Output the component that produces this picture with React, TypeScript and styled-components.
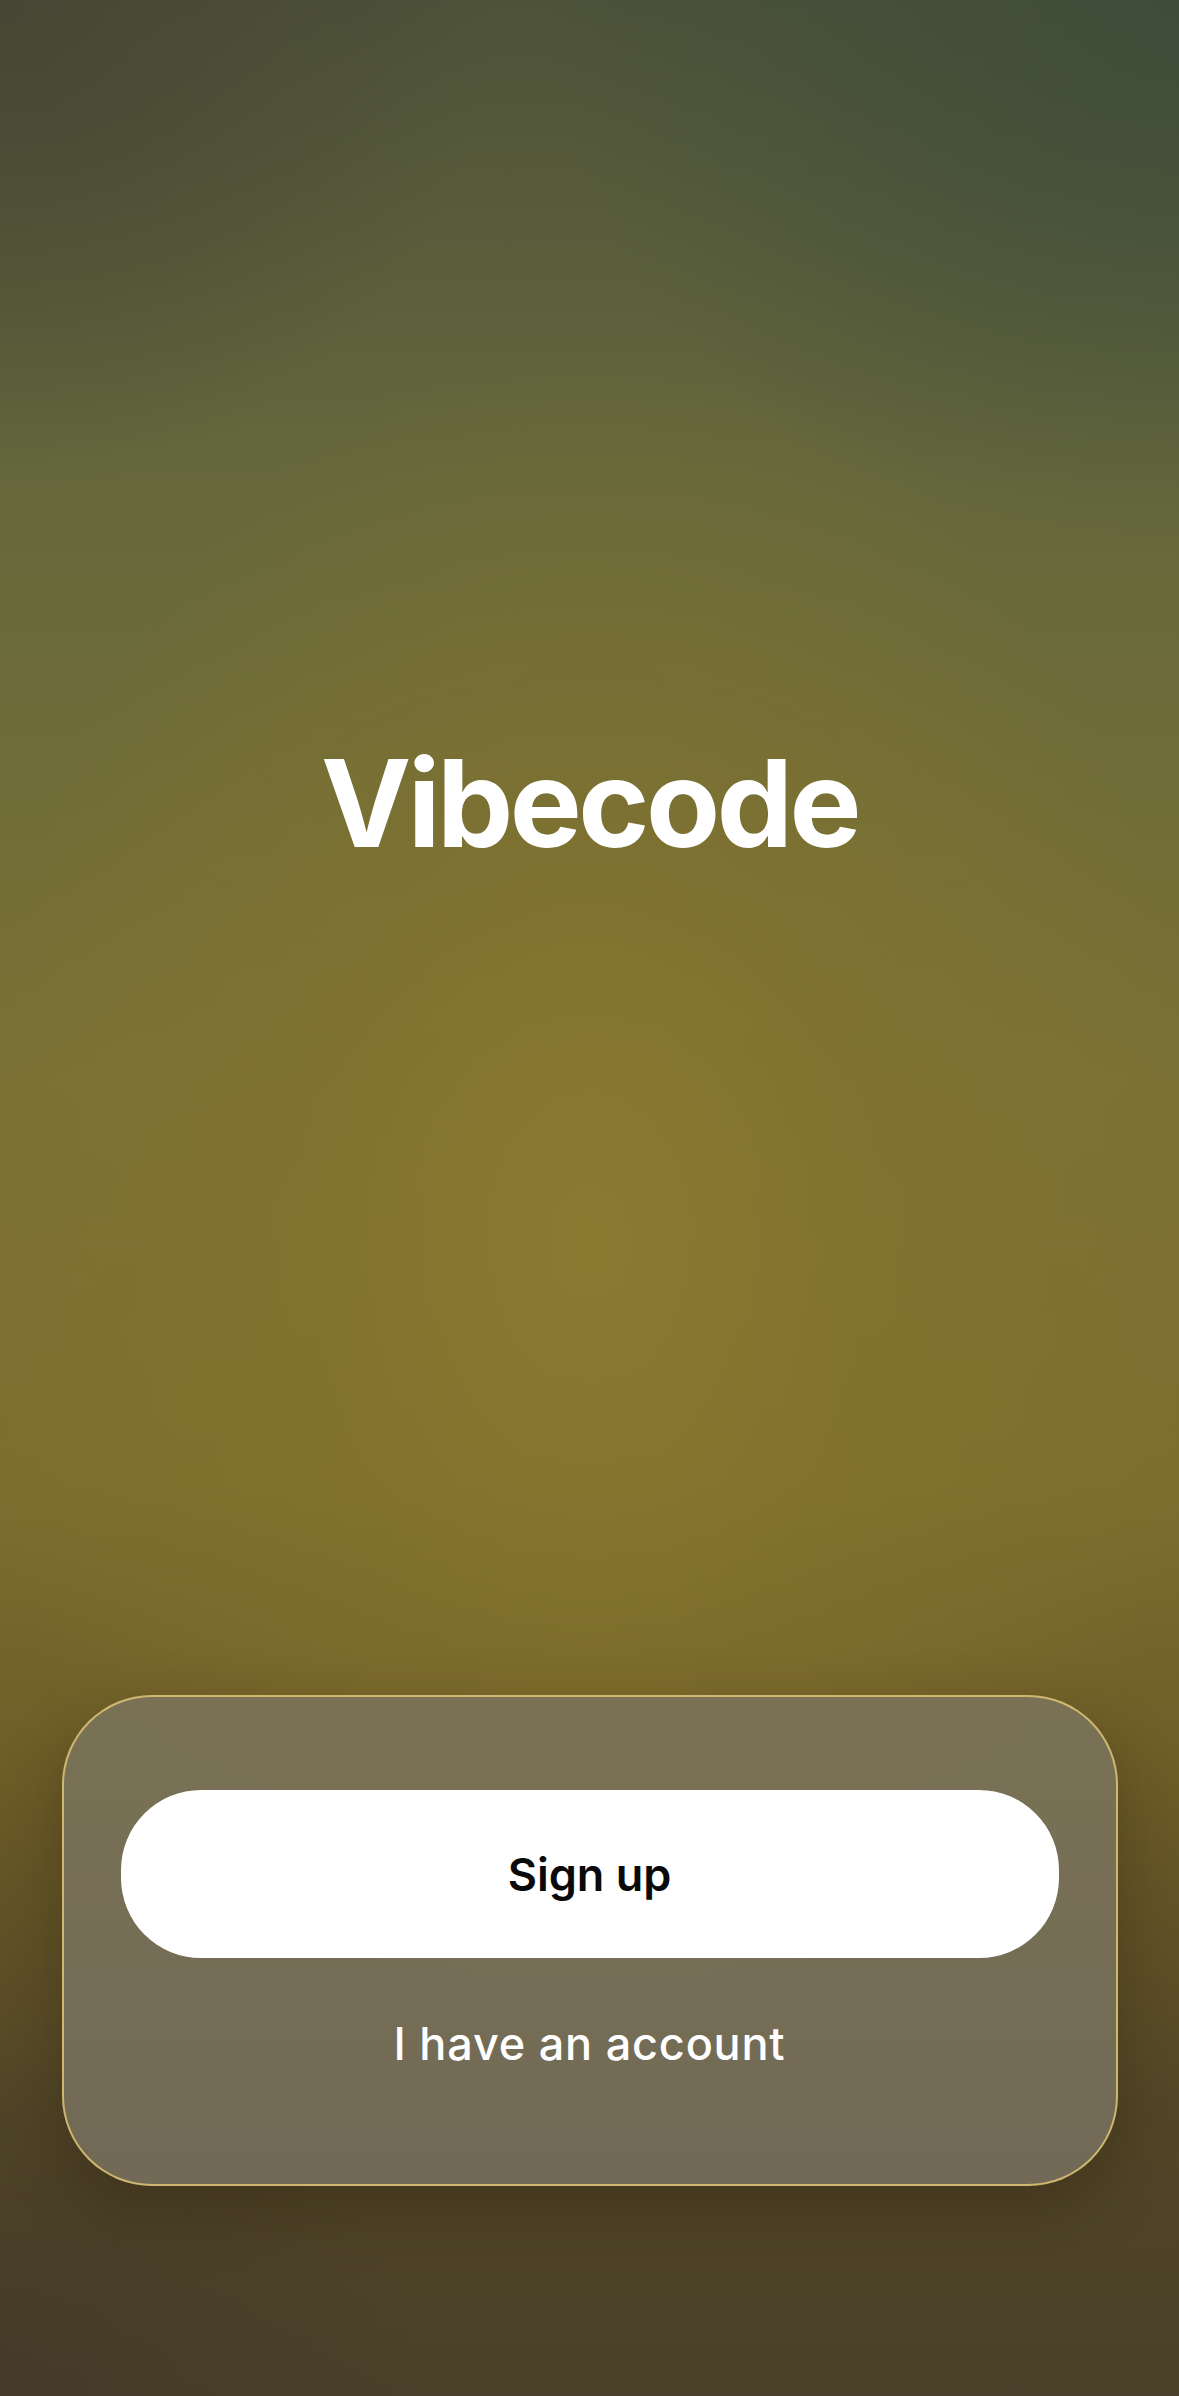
import styled, { createGlobalStyle } from 'styled-components';

const GlobalStyle = createGlobalStyle`
    html, body {
        margin: 0;
        padding: 0;
    }
    body {
        font-family: Inter, "Noto Sans", "Liberation Sans", sans-serif;
        -webkit-font-smoothing: antialiased;
    }
`;

const Screen = styled.main`
    width: 1179px;
    height: 2396px;
    box-sizing: border-box;
    display: flex;
    flex-direction: column;
    align-items: center;
    overflow: hidden;
    background:
        radial-gradient(ellipse 620px 900px at 50% 52%, rgba(140, 122, 48, 0.95) 0%, rgba(132, 116, 46, 0.6) 45%, rgba(120, 105, 45, 0) 100%),
        radial-gradient(ellipse 900px 800px at 100% 0%, rgba(60, 76, 58, 0.9) 0%, rgba(70, 85, 60, 0) 70%),
        radial-gradient(ellipse 700px 700px at 0% 0%, rgba(70, 66, 50, 0.8) 0%, rgba(70, 70, 55, 0) 70%),
        radial-gradient(ellipse 600px 500px at 0% 100%, rgba(66, 56, 40, 0.7) 0%, rgba(66, 56, 40, 0) 70%),
        linear-gradient(180deg, #4d5239 0%, #66683c 20%, #7a7134 45%, #7e6e2e 62%, #6b5b27 75%, #524627 88%, #4a4029 100%);
`;

const Hero = styled.section`
    flex: 0 0 auto;
    height: 1695px;
    width: 100%;
    display: flex;
    justify-content: center;
    padding-top: 730px;
    box-sizing: border-box;
`;

const Title = styled.h1`
    margin: 0;
    font-size: 121px;
    font-weight: 700;
    letter-spacing: -3.5px;
    line-height: 146px;
    color: #ffffff;
`;

const Card = styled.section`
    width: 1056px;
    height: 491px;
    box-sizing: border-box;
    border-radius: 90px;
    border: 2px solid rgba(222, 196, 118, 0.85);
    background: linear-gradient(180deg, rgba(122, 114, 86, 0.97) 0%, rgba(115, 107, 88, 0.97) 100%);
    box-shadow: 0 24px 60px rgba(40, 30, 10, 0.35);
    display: flex;
    flex-direction: column;
    align-items: center;
    padding: 93px 57px 0;
`;

const PrimaryButton = styled.button`
    width: 100%;
    height: 168px;
    border: none;
    border-radius: 80px;
    background: #ffffff;
    color: #0a0a0a;
    font-family: inherit;
    font-size: 45px;
    font-weight: 600;
    letter-spacing: 0px;
    display: flex;
    align-items: center;
    justify-content: center;
`;

const LinkButton = styled.button`
    margin-top: 54px;
    border: none;
    background: none;
    padding: 0;
    color: #ffffff;
    font-family: inherit;
    font-size: 45px;
    font-weight: 500;
    letter-spacing: 0.8px;
    line-height: 64px;
`;

export default function App() {
    return (
        <>
            <GlobalStyle />
            <Screen>
                <Hero>
                    <Title>Vibecode</Title>
                </Hero>
                <Card>
                    <PrimaryButton>Sign up</PrimaryButton>
                    <LinkButton>I have an account</LinkButton>
                </Card>
            </Screen>
        </>
    );
}
